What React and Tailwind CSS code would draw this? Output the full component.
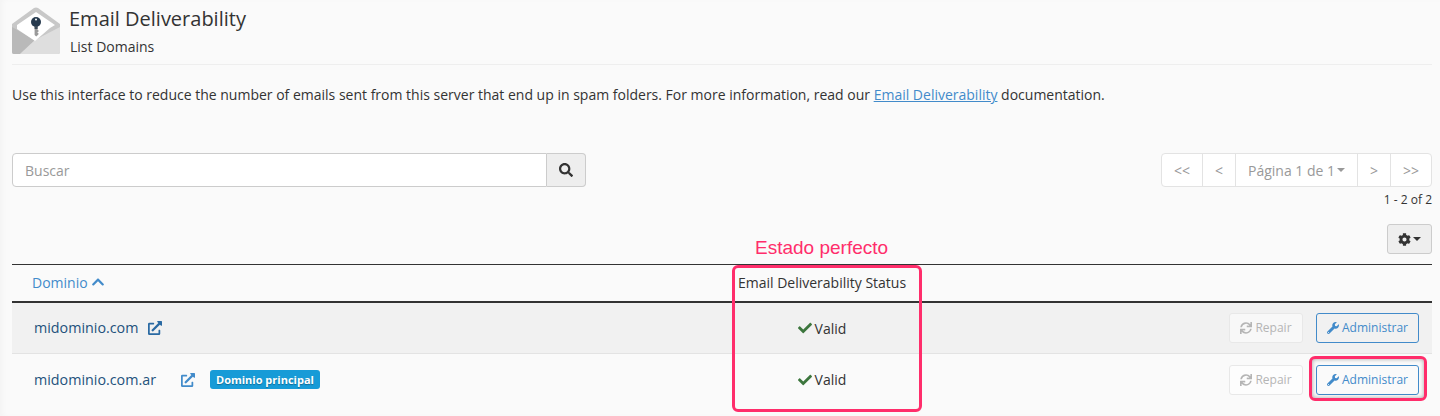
import React from 'react';
import { FaSearch, FaCog, FaSync, FaWrench, FaCheck, FaExternalLinkAlt, FaChevronUp } from 'react-icons/fa';

const DOMAINS = [
  { name: 'midominio.com', iconGap: 'ml-[10px]', striped: true },
  { name: 'midominio.com.ar', iconGap: 'ml-[25px]', main: true },
];

const PAGER_CELL = 'flex items-center justify-center border-r border-[#e3e3e3] last:border-r-0 text-[#999]';

const Caret = () => (
  <span className="inline-block w-0 h-0 ml-[2px] border-x-[4px] border-x-transparent border-t-[4px] border-t-current align-middle" />
);

const EnvelopeIcon = () => (
  <svg width="48" height="48" viewBox="0 0 48 48" className="shrink-0">
    <path d="M0 17 L22 1 Q24 0 26 1 L48 17 V45 Q48 47 46 47 H2 Q0 47 0 45 Z" fill="#c8c8c8" />
    <path d="M0 20 L23 33 L8 47 H2 Q0 47 0 45 Z" fill="#b9b9b9" />
    <path d="M48 20 L23 33 L8 47 H46 Q48 47 48 45 Z" fill="#dedede" />
    <path d="M5 18 L24 5 L43 18 L38 21 L23 34 L5 22 Z" fill="#ffffff" />
    <path d="M22.6 19 H25.6 V23 H26.4 V25 H25.6 V26 H26.4 V27.6 L24.2 29.6 L22.6 28 Z" fill="#9a9a9a" />
    <circle cx="24" cy="15" r="5" fill="#263a4e" />
    <circle cx="24" cy="12.6" r="1" fill="#ffffff" />
    <rect x="22.6" y="19" width="3" height="3" fill="#3b4a58" />
  </svg>
);

export default function App() {
  return (
    <div
      className="relative h-[416px] overflow-hidden bg-[#fafafa] pl-3 pr-2 text-[14px] text-[#333] shadow-[inset_4px_0_6px_-2px_rgba(0,0,0,0.03)]"
      style={{ fontFamily: '"Open Sans", sans-serif' }}
    >
      {/* Page heading */}
      <div className="flex h-[65px] gap-[10px] border-b border-[#eeeeee] pt-[7px]">
        <EnvelopeIcon />
        <div className="flex flex-col">
          <h1 className="-ml-px mt-[-1px] text-[20px] leading-[26px]">Email Deliverability</h1>
          <p className="mt-[6px] text-[14px] leading-[18px]">List Domains</p>
        </div>
      </div>

      <p className="mt-[20px] text-[14px] leading-[20px]">
        Use this interface to reduce the number of emails sent from this server that end up in spam folders. For more information, read our{' '}
        <a className="text-[#428bca] underline">Email Deliverability</a> documentation.
      </p>

      {/* Search and pagination */}
      <div className="mt-[48px] flex items-start justify-between">
        <div className="flex h-[34px] w-[574px]">
          <div className="flex flex-1 items-center rounded-l border border-[#cccccc] bg-white px-3 text-[#999]">Buscar</div>
          <button className="flex w-[39px] items-center justify-center rounded-r border border-l-0 border-[#cccccc] bg-[#eeeeee] text-[#333]">
            <FaSearch className="text-[14px]" />
          </button>
        </div>
        <div className="flex flex-col items-end">
          <div className="flex h-[34px] rounded border border-[#e3e3e3] bg-white">
            <div className={`${PAGER_CELL} w-[41px]`}>&lt;&lt;</div>
            <div className={`${PAGER_CELL} w-[33px]`}>&lt;</div>
            <div className={`${PAGER_CELL} w-[122px]`}>Página 1 de 1<Caret /></div>
            <div className={`${PAGER_CELL} w-[33px]`}>&gt;</div>
            <div className={`${PAGER_CELL} w-[40px]`}>&gt;&gt;</div>
          </div>
          <div className="mt-[4px] text-[12px] leading-[17px]">1 - 2 of 2</div>
        </div>
      </div>

      <div className="mt-[16px] flex justify-end">
        <button className="flex h-[30px] w-[45px] items-center justify-center rounded-[3px] border border-[#cccccc] bg-[#eeeeee] text-[#333]">
          <FaCog className="text-[13px]" />
          <Caret />
        </button>
      </div>

      {/* Domains table */}
      <div className="mt-[10px] border-t border-[#333]">
        <div className="flex h-[38px] items-center border-b-2 border-[#333] pb-[2px]">
          <div className="flex w-[713px] items-center gap-[3px] pl-5 text-[#428bca]">
            Dominio <FaChevronUp className="text-[14px]" />
          </div>
          <div className="w-[194px] text-center text-[14px]">Email Deliverability Status</div>
        </div>
        {DOMAINS.map((d) => (
          <div
            key={d.name}
            className={`flex h-[51px] items-center border-b border-[#e3e3e3] last:border-b-0 ${d.striped ? 'bg-[#f1f1f1]' : ''}`}
          >
            <div className="flex w-[713px] items-center pl-[22px]">
              <a className="text-[14.3px] text-[#23527c]">{d.name}</a>
              <FaExternalLinkAlt className={`${d.iconGap} text-[14px] ${d.striped ? 'text-[#2a6aa3]' : 'text-[#428bca]'}`} />
              {d.main && (
                <span className="ml-[15px] rounded-[3px] bg-[#179bd7] px-[6px] text-[11px] font-bold leading-[19px] text-white [text-shadow:0_1px_1px_rgba(0,0,0,0.3)]">
                  Dominio principal
                </span>
              )}
            </div>
            <div className="flex w-[194px] items-center justify-center gap-[3px]">
              <FaCheck className="text-[14px] text-[#3c763d]" />
              Valid
            </div>
            <div className="flex flex-1 items-center justify-end gap-[13px] pr-[13px] text-[12px]">
              <button className="flex h-[30px] w-[74px] items-center justify-center gap-[3px] rounded-[3px] border border-[#e8e8e8] bg-white/50 text-[#b5b5b5]">
                <FaSync className="text-[12px]" />
                Repair
              </button>
              <button className="flex h-[30px] w-[103px] items-center justify-center gap-[3px] rounded-[3px] border border-[#428bca] text-[#428bca]">
                <FaWrench className="text-[12px]" />
                Administrar
              </button>
            </div>
          </div>
        ))}
      </div>

      {/* Annotations drawn over the screenshot */}
      <div
        className="absolute left-[755px] top-[237px] text-[19px] leading-[22px] text-[#ff2d6b]"
        style={{ fontFamily: '"Liberation Sans", sans-serif' }}
      >
        Estado perfecto
      </div>
      <div className="absolute left-[732px] top-[265px] h-[147px] w-[190px] rounded-[6px] border-[3px] border-[#ff2d6b]" />
      <div className="absolute left-[1309px] top-[356px] h-[45px] w-[118px] rounded-[6px] border-[3px] border-[#ff2d6b] shadow-[inset_0_0_4px_rgba(0,0,0,0.35)]" />
    </div>
  );
}
